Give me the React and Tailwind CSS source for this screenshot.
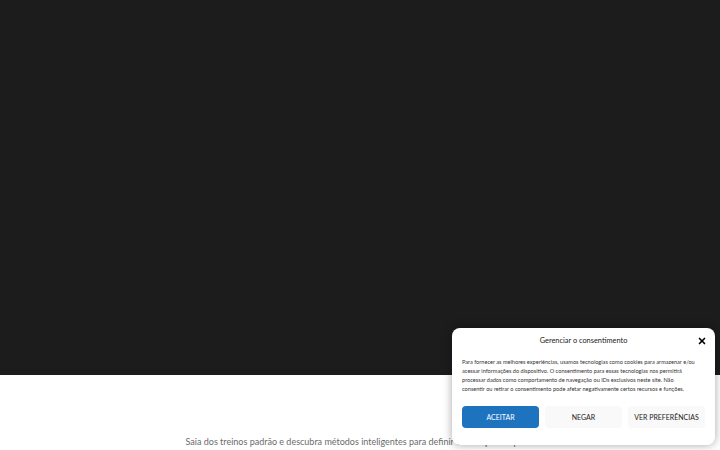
import { X } from 'lucide-react';

export default function App() {
  return (
    <div className="relative h-[450px] w-[720px] overflow-hidden bg-white" style={{ fontFamily: 'Lato, "Open Sans", sans-serif' }}>
      <div className="h-[375px] w-full bg-[#1c1c1c]" />
      <div className="flex justify-center pt-[60px]">
        <p className="text-[9px] leading-[14px] text-[#6b6b6b]">
          Saia dos treinos padrão e descubra métodos inteligentes para definir e alcançar seu peso.
        </p>
      </div>

      {/* consent banner */}
      <div className="absolute bottom-[5px] right-[5px] flex w-[263px] flex-col rounded-[8px] bg-white px-[10px] pt-[8px] pb-[17px] shadow-[0_0_10px_rgba(0,0,0,0.35)]">
        <div className="relative flex h-[10px] items-center justify-center">
          <span className="text-[7.4px] text-[#222]">Gerenciar o consentimento</span>
          <X className="absolute right-[-2px] h-[10px] w-[10px] text-black" strokeWidth={4} />
        </div>
        <p className="mt-[11px] text-[5.6px] leading-[9px] text-[#333]">
          Para fornecer as melhores experiências, usamos tecnologias como cookies para armazenar e/ou
          <br />
          acessar informações do dispositivo. O consentimento para essas tecnologias nos permitirá
          <br />
          processar dados como comportamento de navegação ou IDs exclusivos neste site. Não
          <br />
          consentir ou retirar o consentimento pode afetar negativamente certos recursos e funções.
        </p>
        <div className="mt-[13px] grid grid-cols-3 gap-[6px]">
          <button className="h-[22px] rounded-[4px] bg-[#1e73be] text-[7px] text-white">ACEITAR</button>
          <button className="h-[22px] rounded-[4px] bg-[#f9f9f9] text-[7px] text-[#222]">NEGAR</button>
          <button className="h-[22px] rounded-[4px] bg-[#f9f9f9] text-[7px] text-[#222]">VER PREFERÊNCIAS</button>
        </div>
      </div>
    </div>
  );
}
